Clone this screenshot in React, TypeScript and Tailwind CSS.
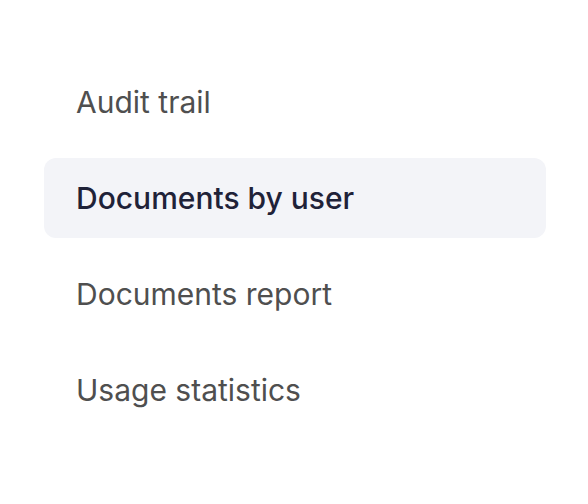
export default function App() {
  const items = ['Audit trail', 'Documents by user', 'Documents report', 'Usage statistics'];
  const active = 'Documents by user';
  return (
    <div className="w-[588px] h-[504px] bg-white pt-[62px] pl-[44px]" style={{ fontFamily: 'Inter, "Noto Sans", sans-serif' }}>
      <nav className="w-[502px] flex flex-col gap-4">
        {items.map((item) => (
          <div
            key={item}
            className={
              item === active
                ? 'h-20 flex items-center px-8 rounded-xl bg-[#f3f4f8] text-[30px] font-medium text-[#1f2238]'
                : 'h-20 flex items-center px-8 rounded-xl text-[30px] text-[#4f4f4f]'
            }
          >
            {item}
          </div>
        ))}
      </nav>
    </div>
  );
}
